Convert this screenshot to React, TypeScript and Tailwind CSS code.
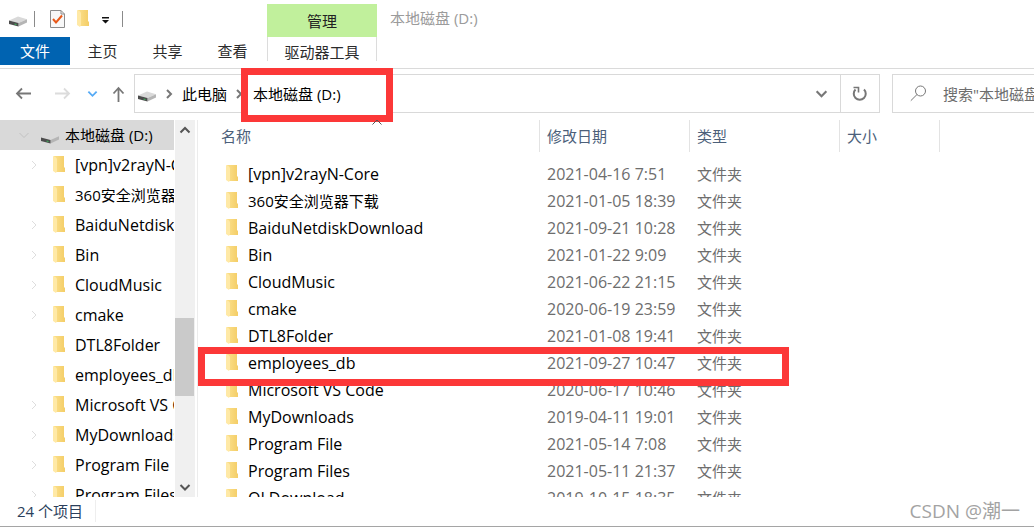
import { useState } from 'react';

interface FileEntry {
    name: string;
    date: string;
}

interface TreeEntry {
    name: string;
    expandable: boolean;
}

const files: FileEntry[] = [
    { name: '[vpn]v2rayN-Core', date: '2021-04-16 7:51' },
    { name: '360安全浏览器下载', date: '2021-01-05 18:39' },
    { name: 'BaiduNetdiskDownload', date: '2021-09-21 10:28' },
    { name: 'Bin', date: '2021-01-22 9:09' },
    { name: 'CloudMusic', date: '2021-06-22 21:15' },
    { name: 'cmake', date: '2020-06-19 23:59' },
    { name: 'DTL8Folder', date: '2021-01-08 19:41' },
    { name: 'employees_db', date: '2021-09-27 10:47' },
    { name: 'Microsoft VS Code', date: '2020-06-17 10:46' },
    { name: 'MyDownloads', date: '2019-04-11 19:01' },
    { name: 'Program File', date: '2021-05-14 7:08' },
    { name: 'Program Files', date: '2021-05-11 21:37' },
    { name: 'QLDownload', date: '2019-10-15 18:35' },
];

const tree: TreeEntry[] = [
    { name: '[vpn]v2rayN-Core', expandable: true },
    { name: '360安全浏览器下载', expandable: false },
    { name: 'BaiduNetdiskDownload', expandable: true },
    { name: 'Bin', expandable: true },
    { name: 'CloudMusic', expandable: true },
    { name: 'cmake', expandable: true },
    { name: 'DTL8Folder', expandable: false },
    { name: 'employees_db', expandable: false },
    { name: 'Microsoft VS Code', expandable: true },
    { name: 'MyDownloads', expandable: true },
    { name: 'Program File', expandable: true },
    { name: 'Program Files', expandable: true },
];

// Latin names are set one pixel larger than Chinese ones
const nameSize = (name: string) => (/[\u4e00-\u9fff]/.test(name) ? 'text-[15px]' : 'text-[16px]');

function FolderIcon() {
    return (
        <svg width="12" height="18" viewBox="0 0 12 18" className="shrink-0">
            <defs>
                <linearGradient id="folder" x1="0" x2="1" y1="0" y2="0">
                    <stop offset="0" stopColor="#fbe08c" />
                    <stop offset="1" stopColor="#f4cd66" />
                </linearGradient>
            </defs>
            <path d="M1 0h10v11l1 1v4H3z" fill="url(#folder)" />
            <path d="M0 0c2 1 4 1 4 4v11l-1 2-3-2z" fill="#ffe9a6" />
        </svg>
    );
}

function DriveIcon() {
    return (
        <svg width="19" height="11" viewBox="0 0 19 11" className="shrink-0">
            <path d="M0 4.5 9 0.5 18 3.2 9.5 7z" fill="#d9d9d9" />
            <path d="M9.5 7 18 3.2V6.4L9.5 10.5z" fill="#b5b5b5" />
            <path d="M0 4.5 9.5 7v3.5L0 8z" fill="#4c4c4c" />
            <path d="M5.5 7.4 7.5 8v1.2l-2-.6z" fill="#3fae5a" />
        </svg>
    );
}

interface ChevronProps {
    direction: 'right' | 'down' | 'up';
    className?: string;
    size?: number;
    weight?: number;
}

function Chevron({ direction, className, size = 12, weight = 2 }: ChevronProps) {
    const paths = {
        right: 'M4 2 8 6 4 10',
        down: 'M1.5 4 6 8.5 10.5 4',
        up: 'M1.5 8.5 6 4 10.5 8.5',
    };
    return (
        <svg width={size} height={size} viewBox="0 0 12 12" fill="none" className={className}>
            <path d={paths[direction]} stroke="currentColor" strokeWidth={weight} />
        </svg>
    );
}

function Arrow({ direction }: { direction: 'left' | 'right' | 'up' }) {
    const paths = {
        left: 'M16 8.5H2M7 3.5 2 8.5 7 13.5',
        right: 'M1 8.5H15M10 3.5 15 8.5 10 13.5',
        up: 'M8.5 17V3M3.5 8.500 8.5 3 13.5 8.500',
    };
    return (
        <svg width="17" height="17" viewBox="0 0 17 17" fill="none">
            <path d={paths[direction]} stroke="currentColor" strokeWidth="1.8" />
        </svg>
    );
}

function TitleBar() {
    return (
        <header className="flex h-[37px]">
            <div className="flex w-[267px] items-center pl-[9px]">
                <div className="pt-1.5">
                    <DriveIcon />
                </div>
                <span className="ml-1.5 h-4 w-px bg-[#8a8a8a]" />
                <button aria-label="属性" className="ml-[15px]">
                    <svg width="15" height="18" viewBox="0 0 15 18" fill="none">
                        <path d="M.5.5H11L14.5 4V17.5H.5z" fill="#f8f8f8" stroke="#8c8c8c" />
                        <path d="M11 .5V4h3.5" stroke="#8c8c8c" />
                        <path d="m3 9 3 3.5 6-7" stroke="#e8591a" strokeWidth="2" />
                    </svg>
                </button>
                <button aria-label="新建文件夹" className="ml-3">
                    <FolderIcon />
                </button>
                <button aria-label="自定义快速访问工具栏" className="ml-3 pt-1">
                    <svg width="9" height="7" viewBox="0 0 9 7">
                        <path d="M1 0h7v1.5H1zM1 3h7L4.5 6.5z" fill="#111" />
                    </svg>
                </button>
                <span className="ml-3 h-4 w-px bg-[#8a8a8a]" />
            </div>
            <div className="mt-1 flex w-[110px] items-center justify-center bg-[#c1f09c] text-[#222]">管理</div>
            <h1 className="ml-[13px] flex items-center pb-px text-[#9b9b9b]">本地磁盘 (D:)</h1>
        </header>
    );
}

function Ribbon() {
    return (
        <nav className="flex h-8 items-start border-b border-[#dadada] text-[#2b2b2b]">
            <button className="h-7 w-[70px] bg-[#0063b1] text-white">文件</button>
            <button className="h-7 w-[65px]">主页</button>
            <button className="h-7 w-[65px]">共享</button>
            <button className="h-7 w-[65px]">查看</button>
            <button className="ml-0.5 h-6 w-[110px] border-x border-[#dcdcdc] pt-1">驱动器工具</button>
        </nav>
    );
}

function AddressBar() {
    const [query, setQuery] = useState('');

    return (
        <div className="flex h-[51px] items-start pt-[5px]">
            <div className="flex h-[39px] w-[134px] shrink-0 items-center text-[#777]">
                <button aria-label="后退" className="ml-[15px]">
                    <Arrow direction="left" />
                </button>
                <button aria-label="前进" className="ml-[22px] text-[#dcdcdc]">
                    <Arrow direction="right" />
                </button>
                <button aria-label="最近浏览的位置" className="ml-4 text-[#55aaf5]">
                    <Chevron direction="down" size={11} />
                </button>
                <button aria-label="上移" className="ml-3">
                    <Arrow direction="up" />
                </button>
            </div>
            <div className="flex h-[39px] flex-1 items-center border border-[#d9d9d9] text-black">
                <span className="ml-[3px] pt-1.5">
                    <DriveIcon />
                </span>
                <Chevron direction="right" className="ml-1.5 shrink-0 text-[#777]" />
                <button className="ml-[7px] shrink-0">此电脑</button>
                <Chevron direction="right" className="ml-1.5 shrink-0 text-[#777]" />
                <div className="relative ml-2 shrink-0">
                    <span className="pointer-events-none absolute -top-[15px] -left-3 h-[54px] w-[152px] border-[7px] border-[#fc3838] bg-white" />
                    <button className="relative">本地磁盘 (D:)</button>
                </div>
                <button aria-label="历史记录" className="mr-3 ml-auto text-[#777]">
                    <Chevron direction="down" size={13} />
                </button>
                <button
                    aria-label="刷新"
                    className="flex h-full w-[39px] items-center justify-center border-l border-[#d9d9d9] text-[#777]"
                >
                    <svg width="16" height="17" viewBox="0 0 16 17" fill="none" stroke="currentColor" strokeWidth="2">
                        <path d="M12 4.5a6 6 0 1 1-8.500 0" />
                        <path d="M1.5 2.500h5v5" strokeWidth="1.6" />
                    </svg>
                </button>
            </div>
            <label className="ml-3 flex h-[39px] w-[142px] items-center overflow-hidden border border-r-0 border-[#d9d9d9]">
                <svg width="17" height="17" viewBox="0 0 17 17" fill="none" stroke="#777" className="ml-[17px] shrink-0">
                    <circle cx="10.5" cy="6" r="5" />
                    <path d="M7 9.5.8 15.7" />
                </svg>
                <input
                    aria-label="搜索"
                    value={query}
                    onChange={(e) => setQuery(e.target.value)}
                    placeholder={'搜索"本地磁盘 (D:)"'}
                    className="ml-4 w-40 shrink-0 outline-none placeholder:text-[#6d6d6d]"
                />
            </label>
        </div>
    );
}

function Sidebar() {
    return (
        <aside className="flex w-[198px] shrink-0 border-r border-[#ececec]">
            <ul className="w-[174px] overflow-hidden whitespace-nowrap text-black">
                <li className="flex h-[30px] items-center bg-[#d9d9d9]">
                    <Chevron direction="down" className="ml-[18px] shrink-0 text-[#c2c2c2]" weight={1} />
                    <span className="ml-[11px] pt-1.5">
                        <DriveIcon />
                    </span>
                    <span className="ml-[5px]">本地磁盘 (D:)</span>
                </li>
                {tree.map((item) => (
                    <li key={item.name} className="flex h-[30px] items-center">
                        <span className="ml-7 w-[25px] shrink-0">
                            {item.expandable && <Chevron direction="right" className="text-[#dedede]" weight={1} />}
                        </span>
                        <FolderIcon />
                        <span className={`ml-[10px] ${nameSize(item.name)}`}>{item.name}</span>
                    </li>
                ))}
            </ul>
            <div className="ml-px flex w-5 flex-col items-center bg-[#f0f0f0] text-[#555]">
                <button aria-label="向上滚动" className="flex h-5 items-center">
                    <Chevron direction="up" />
                </button>
                <div className="mt-[178px] mr-px h-[78px] w-[19px] bg-[#cacaca]" />
                <button aria-label="向下滚动" className="mt-auto flex h-5 items-center">
                    <Chevron direction="down" />
                </button>
            </div>
        </aside>
    );
}

function FileList() {
    return (
        <main className="relative flex-1">
            <div className="h-full overflow-hidden">
                <table className="w-full table-fixed border-collapse text-left">
                    <colgroup>
                        <col className="w-[342px]" />
                        <col className="w-[150px]" />
                        <col className="w-[150px]" />
                        <col className="w-[100px]" />
                        <col />
                    </colgroup>
                    <thead className="text-[#4c607a]">
                        <tr className="h-8">
                            <th className="pl-[23px] font-normal shadow-[inset_-1px_0_#e3e3e3]">名称</th>
                            <th className="pl-[7px] font-normal shadow-[inset_-1px_0_#e3e3e3]">修改日期</th>
                            <th className="pl-[7px] font-normal shadow-[inset_-1px_0_#e3e3e3]">类型</th>
                            <th className="pl-[7px] font-normal shadow-[inset_-1px_0_#e3e3e3]">大小</th>
                            <th />
                        </tr>
                        <tr className="h-2" />
                    </thead>
                    <tbody className="text-[#6d6d6d]">
                        {files.map((file) => (
                            <tr key={file.name} className="h-[27px]">
                                <td className="pl-7 text-black">
                                    <span className={`flex items-center gap-[10px] ${nameSize(file.name)}`}>
                                        <FolderIcon />
                                        {file.name}
                                    </span>
                                </td>
                                <td className="pl-[7px] text-[16px]">{file.date}</td>
                                <td className="pl-[7px]">文件夹</td>
                                <td />
                                <td />
                            </tr>
                        ))}
                    </tbody>
                </table>
            </div>
            {/* sort marker and the box round employees_db */}
            <Chevron direction="up" size={12} weight={1} className="absolute -top-1 left-[173px] text-[#555]" />
            <span className="pointer-events-none absolute top-[227px] left-0 h-[39px] w-[591px] border-[7px] border-[#fc3838]" />
        </main>
    );
}

export default function App() {
    return (
        <div className="flex h-screen flex-col overflow-hidden border-b border-[#a5a5a5] bg-white font-['Open_Sans','Noto_Sans_CJK_SC',sans-serif] text-[15px] leading-[22px]">
            <TitleBar />
            <Ribbon />
            <AddressBar />
            <div className="flex min-h-0 flex-1">
                <Sidebar />
                <FileList />
            </div>
            <footer className="flex h-[29px] shrink-0 items-start justify-between pt-[3px] pr-[14px] pl-[17px]">
                <span className="border-r border-[#eee] pr-3 text-[#2b3f5c]">24 个项目</span>
                <span className="text-[19px] text-[#a3a3a3]">CSDN @潮一</span>
            </footer>
        </div>
    );
}
